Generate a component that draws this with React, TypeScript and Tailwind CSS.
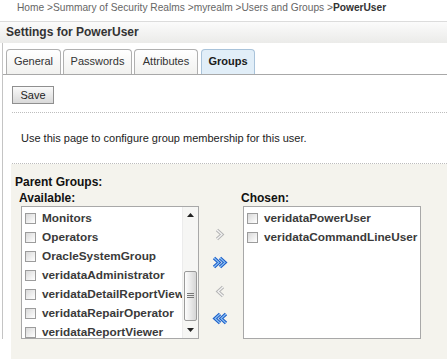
import React from 'react';

const available = [
  'Monitors',
  'Operators',
  'OracleSystemGroup',
  'veridataAdministrator',
  'veridataDetailReportViewer',
  'veridataRepairOperator',
  'veridataReportViewer',
];

const chosen = ['veridataPowerUser', 'veridataCommandLineUser'];

export default function App() {
  return (
    <div
      className="w-[447px] h-[359px] bg-white overflow-hidden text-[#333]"
      style={{ fontFamily: '"Liberation Sans", Arial, sans-serif' }}
    >
      {/* Breadcrumb */}
      <div className="h-[21px] pl-[17px] pt-[1px] text-[10.2px] leading-[13px] text-[#666] whitespace-nowrap">
        Home &gt;Summary of Security Realms &gt;myrealm &gt;Users and Groups &gt;
        <span className="font-bold text-[#333]">PowerUser</span>
      </div>

      {/* Title bar */}
      <div className="h-[22px] border-t border-[#dcdcdc] bg-gradient-to-b from-[#fbfbfb] to-[#ebebe9] pl-[6px] text-[12px] font-bold leading-[21px] text-[#333]">
        Settings for PowerUser
      </div>

      <div className="ml-[2px] h-[296px] border-l border-[#c4c4c4]">
        {/* Tabs */}
        <div className="flex items-end gap-[2px] pl-[3px] pt-[6px] border-b border-[#a8a8a8]">
          <Tab label="General" w="w-[55px]" />
          <Tab label="Passwords" w="w-[69px]" />
          <Tab label="Attributes" w="w-[64px]" />
          <div className="ml-[1px] h-[25px] w-[54px] rounded-t-[4px] border border-b-0 border-[#a9c3da] bg-[#e1eef8] text-center text-[11px] font-bold leading-[23px] text-[#1a1a1a]">
            Groups
          </div>
        </div>

        {/* Save */}
        <div className="flex pl-[9px] pt-[11px]">
          <button className="h-[18px] w-[42px] border border-[#8f8f8f] bg-gradient-to-b from-[#fafafa] to-[#d9d9d9] text-[11px] leading-[15px] text-[#222]">
            Save
          </button>
        </div>

        <div className="ml-[9px] mt-[8px] border-t border-dotted border-[#bdbdbd]" />

        <div className="pl-[18px] pt-[19px] h-[50px] text-[11px] leading-[13px] text-[#222]">
          Use this page to configure group membership for this user.
        </div>

        <div className="ml-[9px] border-t border-dotted border-[#bdbdbd]" />

        {/* Parent groups */}
        <div className="ml-[8px] h-[196px] bg-[#f4f3ed] pl-[4px] pt-[11px]">
          <div className="text-[12px] font-bold leading-[14px] text-[#111]">Parent Groups:</div>
          <div className="flex mt-[2px]">
            <div>
              <div className="pl-[4px] text-[12px] font-bold leading-[14px] text-[#111]">Available:</div>
              <div className="ml-[6px] mt-[1px] flex h-[133px] w-[178px] border border-[#a8a8a8] bg-white">
                <div className="flex-1 overflow-hidden pt-[2px]">
                  {available.map((g) => (
                    <Item key={g} label={g} />
                  ))}
                </div>
                <Scrollbar />
              </div>
            </div>

            <div className="w-[42px] flex flex-col items-center pt-[37px]">
              <Single dir="right" />
              <div className="h-[15px]" />
              <Double dir="right" />
              <div className="h-[16px]" />
              <Single dir="left" />
              <div className="h-[14px]" />
              <Double dir="left" />
            </div>

            <div>
              <div className="text-[12px] font-bold leading-[14px] text-[#111]">Chosen:</div>
              <div className="ml-[2px] mt-[1px] h-[133px] w-[178px] border border-[#a8a8a8] bg-white pt-[2px]">
                {chosen.map((g) => (
                  <Item key={g} label={g} />
                ))}
              </div>
            </div>
          </div>
        </div>
      </div>
    </div>
  );
}

function Tab({ label, w }: { label: string; w: string }) {
  return (
    <div
      className={`${w} h-[25px] rounded-t-[4px] border border-b-0 border-[#b0b0b0] bg-gradient-to-b from-white to-[#f1f1ef] text-center text-[11px] leading-[23px] text-[#333]`}
    >
      {label}
    </div>
  );
}

function Item({ label }: { label: string }) {
  return (
    <div className="flex h-[19px] items-center whitespace-nowrap pl-[3px]">
      <span className="h-[11px] w-[11px] shrink-0 border border-[#9c9c9c] bg-gradient-to-br from-[#d9d9d9] to-white" />
      <span className="ml-[6px] text-[11.8px] font-bold text-[#3a3a3a]">{label}</span>
    </div>
  );
}

function Scrollbar() {
  return (
    <div className="flex w-[16px] flex-col bg-[#f6f6f4] border-l border-[#ececec]">
      <div className="flex h-[16px] items-center justify-center">
        <svg width="7" height="4" viewBox="0 0 7 4">
          <path d="M0 4 L3.5 0 L7 4 Z" fill="#222" />
        </svg>
      </div>
      <div className="h-[48px]" />
      <div className="mx-[1px] flex h-[50px] items-center justify-center rounded-[2px] border border-[#9a9a9a] bg-gradient-to-r from-[#fdfdfd] to-[#d6d6d6]">
        <svg width="7" height="6" viewBox="0 0 7 6">
          <path d="M0 0.5 H7 M0 2.5 H7 M0 4.5 H7" stroke="#777" strokeWidth="1" />
        </svg>
      </div>
      <div className="flex-1" />
      <div className="flex h-[16px] items-center justify-center">
        <svg width="7" height="4" viewBox="0 0 7 4">
          <path d="M0 0 L3.5 4 L7 0 Z" fill="#222" />
        </svg>
      </div>
    </div>
  );
}

function Single({ dir }: { dir: 'left' | 'right' }) {
  const d = dir === 'right' ? 'M2 2 L7 6.5 L2 11' : 'M8 2 L3 6.5 L8 11';
  return (
    <svg width="10" height="13" viewBox="0 0 10 13">
      <path d={d} fill="none" stroke="#b5b5b5" strokeWidth="3.2" strokeLinejoin="miter" />
      <path d={d} fill="none" stroke="#f4f4f4" strokeWidth="1.2" strokeLinejoin="miter" />
    </svg>
  );
}

function Double({ dir }: { dir: 'left' | 'right' }) {
  const d =
    dir === 'right'
      ? 'M2 2 L7 6.5 L2 11 M8 2 L13 6.5 L8 11'
      : 'M14 2 L9 6.5 L14 11 M8 2 L3 6.5 L8 11';
  return (
    <svg width="16" height="13" viewBox="0 0 16 13">
      <path d={d} fill="none" stroke="#1d5fc9" strokeWidth="3.4" strokeLinejoin="miter" />
      <path d={d} fill="none" stroke="#8cc0f4" strokeWidth="1.1" strokeLinejoin="miter" />
    </svg>
  );
}
